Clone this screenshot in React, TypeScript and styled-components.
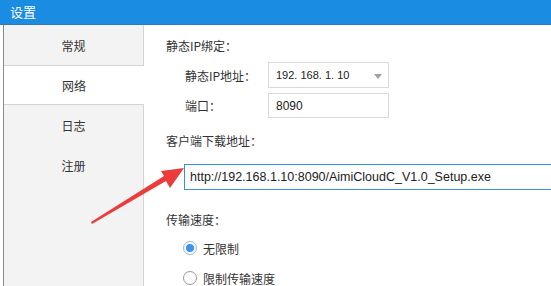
import React from "react";
import styled, { createGlobalStyle } from "styled-components";

const GlobalStyle = createGlobalStyle`
  html, body { margin: 0; padding: 0; background: #ffffff; }
  body {
    width: 551px; height: 286px; overflow: hidden;
    font-family: "Noto Sans CJK SC", "Liberation Sans", sans-serif;
    color: #333333;
  }
`;

const Window = styled.div`
  position: relative;
  width: 551px;
  height: 286px;
  overflow: hidden;
  display: flex;
  flex-direction: column;
`;

const TitleBar = styled.div`
  height: 24px;
  border-bottom: 1px solid #2f79bf;
  background: #1a8de2;
  color: #ffffff;
  font-size: 13px;
  line-height: 24px;
  padding-left: 10px;
  flex-shrink: 0;
`;

const Body = styled.div`
  flex: 1;
  display: flex;
  padding-left: 3px;
  min-height: 0;
`;

const Sidebar = styled.div`
  width: 139px;
  border-left: 1px solid #8c8c8c;
  border-right: 1px solid #d4d4d4;
  background: #f3f3f3;
  display: flex;
  flex-direction: column;
  flex-shrink: 0;
`;

const NavItem = styled.div<{ $active?: boolean }>`
  box-sizing: border-box;
  height: 40px;
  display: flex;
  align-items: center;
  justify-content: center;
  font-size: 12px;
  color: #333333;
  background: ${(p) => (p.$active ? "#ffffff" : "transparent")};
  border-top: 1px solid ${(p) => (p.$active ? "#d4d4d4" : "transparent")};
  border-bottom: 1px solid ${(p) => (p.$active ? "#d4d4d4" : "transparent")};
  margin-right: ${(p) => (p.$active ? "-1px" : "0")};
`;

const Content = styled.div`
  flex: 1;
  display: flex;
  flex-direction: column;
  padding-left: 22px;
  padding-top: 13px;
  font-size: 12px;
  min-width: 0;
`;

const SectionTitle = styled.div<{ $mt?: number }>`
  height: 16px;
  line-height: 16px;
  margin-top: ${(p) => p.$mt ?? 0}px;
`;

const FieldRow = styled.div<{ $mt?: number }>`
  display: flex;
  align-items: center;
  padding-left: 19px;
  margin-top: ${(p) => p.$mt ?? 0}px;
`;

const FieldLabel = styled.div`
  width: 83px;
  flex-shrink: 0;
`;

const Select = styled.div`
  box-sizing: border-box;
  width: 121px;
  height: 26px;
  border: 1px solid #d9d9d9;
  display: flex;
  align-items: center;
  justify-content: space-between;
  padding: 0 6px 0 7px;
  font-family: "Liberation Sans", sans-serif;
  font-size: 11px;
  color: #222222;
`;

const Caret = styled.span`
  width: 0;
  height: 0;
  border-left: 4px solid transparent;
  border-right: 4px solid transparent;
  border-top: 5px solid #a0a0a0;
  margin-top: 2px;
`;

const TextBox = styled.div<{ $focus?: boolean; $w: number; $h: number }>`
  box-sizing: border-box;
  width: ${(p) => p.$w}px;
  height: ${(p) => p.$h}px;
  flex-shrink: 0;
  border: 1px solid ${(p) => (p.$focus ? "#3c8fd8" : "#d9d9d9")};
  display: flex;
  align-items: center;
  padding-left: ${(p) => (p.$focus ? 5 : 7)}px;
  font-family: "Liberation Sans", sans-serif;
  font-size: ${(p) => (p.$focus ? 12.5 : 12)}px;
  color: #222222;
  white-space: nowrap;
`;

const UrlRow = styled.div`
  display: flex;
  padding-left: 18px;
  margin-top: 15px;
`;

const RadioRow = styled.div<{ $mt: number }>`
  display: flex;
  align-items: center;
  gap: 6px;
  padding-left: 17px;
  margin-top: ${(p) => p.$mt}px;
  height: 16px;
  flex-shrink: 0;
`;

const RadioCircle = styled.span<{ $checked?: boolean }>`
  box-sizing: border-box;
  width: 14px;
  height: 14px;
  border-radius: 50%;
  border: 1px solid ${(p) => (p.$checked ? "#8fbbe6" : "#9a9a9a")};
  background: #ffffff;
  display: flex;
  align-items: center;
  justify-content: center;
  &::after {
    content: "";
    width: 8px;
    height: 8px;
    border-radius: 50%;
    background: ${(p) => (p.$checked ? "#3a96e8" : "transparent")};
  }
`;

const ArrowLayer = styled.svg`
  position: absolute;
  left: 0;
  top: 0;
  pointer-events: none;
`;

export default function App() {
  return (
    <>
      <GlobalStyle />
      <Window>
        <TitleBar>设置</TitleBar>
        <Body>
          <Sidebar>
            <NavItem>常规</NavItem>
            <NavItem $active>网络</NavItem>
            <NavItem>日志</NavItem>
            <NavItem>注册</NavItem>
          </Sidebar>
          <Content>
            <SectionTitle>静态IP绑定：</SectionTitle>
            <FieldRow $mt={8}>
              <FieldLabel>静态IP地址：</FieldLabel>
              <Select>
                <span>192. 168. 1. 10</span>
                <Caret />
              </Select>
            </FieldRow>
            <FieldRow $mt={5}>
              <FieldLabel>端口：</FieldLabel>
              <TextBox $w={121} $h={25}>8090</TextBox>
            </FieldRow>
            <SectionTitle $mt={15}>客户端下载地址：</SectionTitle>
            <UrlRow>
              <TextBox $focus $w={400} $h={26}>
                http://192.168.1.10:8090/AimiCloudC_V1.0_Setup.exe
              </TextBox>
            </UrlRow>
            <SectionTitle $mt={22}>传输速度：</SectionTitle>
            <RadioRow $mt={12}>
              <RadioCircle $checked />
              <span>无限制</span>
            </RadioRow>
            <RadioRow $mt={14}>
              <RadioCircle />
              <span>限制传输速度</span>
            </RadioRow>
          </Content>
        </Body>
        <ArrowLayer width="551" height="286" viewBox="0 0 551 286">
          <polygon
            points="91,222 92,224 166,181 170,188 184,168 161,171 164,176"
            fill="#ec3b3b"
          />
        </ArrowLayer>
      </Window>
    </>
  );
}
